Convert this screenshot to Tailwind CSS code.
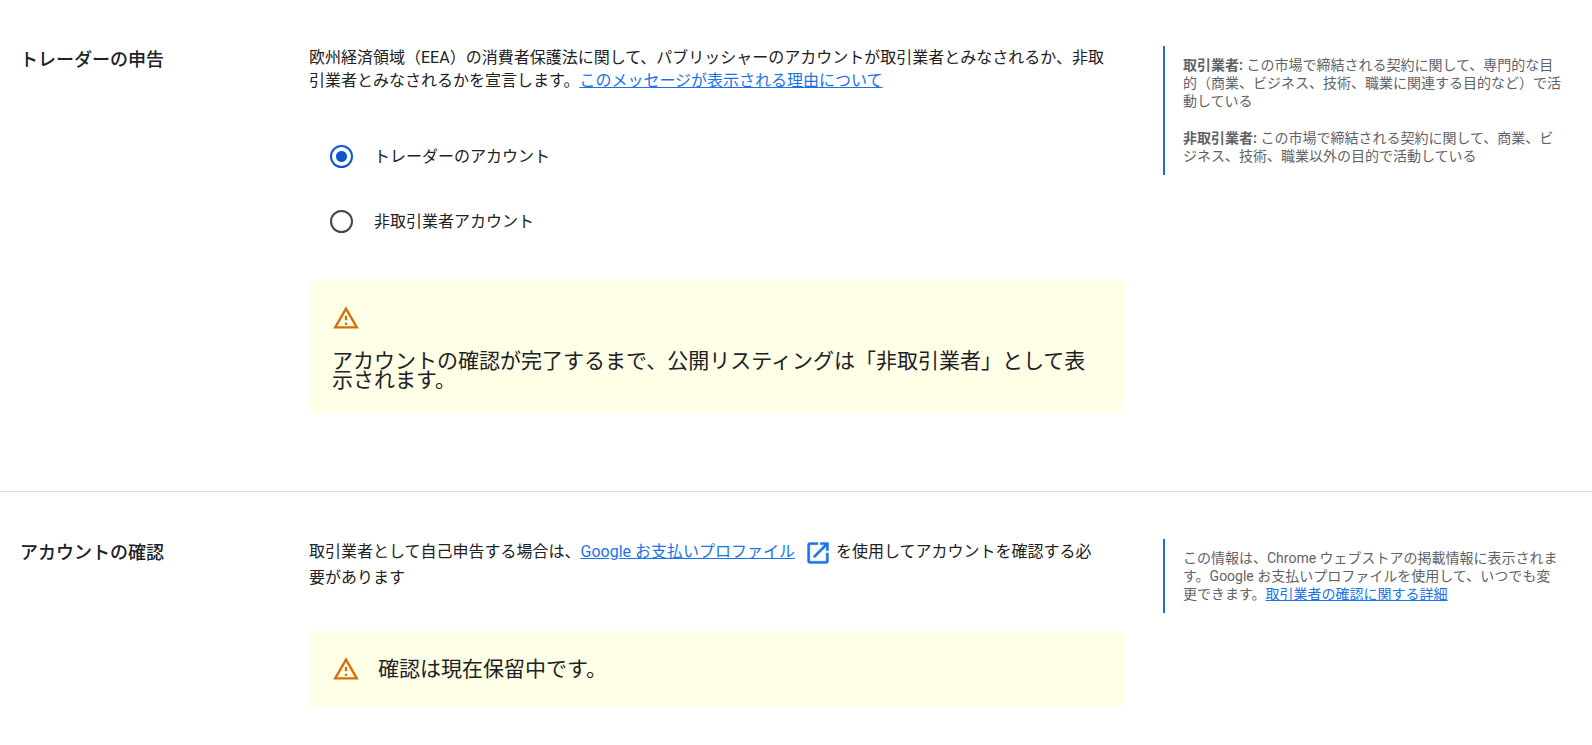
<!DOCTYPE html>
<html lang="ja">
<head>
<meta charset="utf-8">
<meta name="viewport" content="width=device-width, initial-scale=1">
<title>アカウント</title>
<script src="https://cdn.jsdelivr.net/npm/@tailwindcss/browser@4"></script>
</head>
<body class="bg-white font-['Roboto','Noto_Sans_CJK_JP',sans-serif] text-base text-[#202124]">
<main>
  <section class="grid grid-cols-[289px_minmax(0,1fr)_401px] items-start border-b border-[#dadce0] pt-[46px] pr-7 pb-[77px] pl-5">
    <h2 class="text-lg leading-[27px] font-medium">トレーダーの申告</h2>
    <div class="pr-[38px]">
      <p class="leading-[23px]">欧州経済領域（EEA）の消費者保護法に関して、パブリッシャーのアカウントが取引業者とみなされるか、非取<br>引業者とみなされるかを宣言します。<a href="#" class="text-[#1a73e8] underline">このメッセージが表示される理由について</a></p>
      <fieldset aria-label="アカウントの種類" class="mt-8 mb-[26px] pl-[21px]">
        <div class="flex h-[65px] items-center gap-[21px]">
          <input id="trader" type="radio" name="account" checked class="size-[23px] appearance-none rounded-full border-2 border-[#444746] checked:border-[#0b57d0] checked:bg-[radial-gradient(circle,#0b57d0_5px,transparent_6px)]">
          <label for="trader">トレーダーのアカウント</label>
        </div>
        <div class="flex h-[65px] items-center gap-[21px]">
          <input id="non-trader" type="radio" name="account" class="size-[23px] appearance-none rounded-full border-2 border-[#444746] checked:border-[#0b57d0] checked:bg-[radial-gradient(circle,#0b57d0_5px,transparent_6px)]">
          <label for="non-trader">非取引業者アカウント</label>
        </div>
      </fieldset>
      <div class="rounded-md bg-[#fffee6] px-[23px] py-6">
        <svg class="mb-5 size-7" viewBox="0 0 24 24" fill="#d56e0c" aria-hidden="true"><path d="M12 5.99 19.53 19H4.47L12 5.99M12 2 1 21h22L12 2zm1 14h-2v2h2v-2zm0-6h-2v4h2v-4z"/></svg>
        <p class="text-[21px] leading-[19px]">アカウントの確認が完了するまで、公開リスティングは「非取引業者」として表示されます。</p>
      </div>
    </div>
    <aside class="border-l-2 border-[#1a73c8] py-[10px] pl-[18px] text-sm leading-[18px] text-[#5f6368]">
      <p><b>取引業者:</b> この市場で締結される契約に関して、専門的な目的（商業、ビジネス、技術、職業に関連する目的など）で活動している</p>
      <p class="mt-[19px]"><b>非取引業者:</b> この市場で締結される契約に関して、商業、ビジネス、技術、職業以外の目的で活動している</p>
    </aside>
  </section>

  <section class="grid grid-cols-[289px_minmax(0,1fr)_401px] items-start pt-[47px] pr-7 pb-9 pl-5">
    <h2 class="text-lg leading-[27px] font-medium">アカウントの確認</h2>
    <div class="pr-[38px]">
      <p class="leading-[26px]">取引業者として自己申告する場合は、<a href="#" class="text-[#1a73e8] underline">Google お支払いプロファイル</a><svg class="-my-1 mr-1 ml-[9px] inline size-7 align-middle" viewBox="0 0 24 24" fill="#1a73e8" stroke="#1a73e8" stroke-width=".3" aria-hidden="true"><path d="M19 19H5V5h7V3H5a2 2 0 0 0-2 2v14a2 2 0 0 0 2 2h14c1.1 0 2-.9 2-2v-7h-2v7zM14 3v2h3.59l-9.83 9.83 1.41 1.41L19 6.41V10h2V3h-7z"/></svg>を使用してアカウントを確認する必<br>要があります</p>
      <div class="mt-10 flex items-center gap-[18px] rounded-md bg-[#fffee6] px-[23px] py-6">
        <svg class="size-7" viewBox="0 0 24 24" fill="#d56e0c" aria-hidden="true"><path d="M12 5.99 19.53 19H4.47L12 5.99M12 2 1 21h22L12 2zm1 14h-2v2h2v-2zm0-6h-2v4h2v-4z"/></svg>
        <p class="text-[21px] leading-[19px]">確認は現在保留中です。</p>
      </div>
    </div>
    <aside class="border-l-2 border-[#1a73c8] py-[10px] pl-[18px] text-sm leading-[18px] text-[#5f6368]">
      <p>この情報は、Chrome ウェブストアの掲載情報に表示されます。Google お支払いプロファイルを使用して、いつでも変更できます。<a href="#" class="text-[#1a73e8] underline">取引業者の確認に関する詳細</a></p>
    </aside>
  </section>
</main>
</body>
</html>
